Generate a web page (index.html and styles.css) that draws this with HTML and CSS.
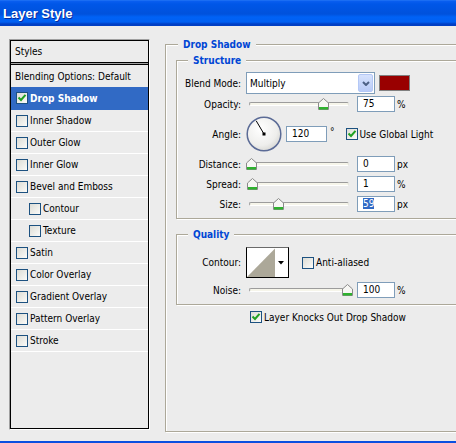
FILE: index.html
```html
<!DOCTYPE html>
<html lang="en">
<head>
  <meta charset="UTF-8"/>
  <title>Layer Style</title>
  <link rel="stylesheet" href="styles.css">
</head>
<body>
  <div class="window">
    <div class="titlebar">Layer Style</div>

    <div class="dialog">
      <div class="styles-panel">
        <div class="styles-list">
          <div class="styles-head">Styles</div>
          <div class="styles-sep"></div>
          <div class="style-item blending">Blending Options: Default</div>
          <div class="style-item selected">
            <span class="check"><svg width="10" height="10" viewBox="0 0 10 10"><path d="M1.5 4.5 L4 7 L8.5 1.8" fill="none" stroke="#21a121" stroke-width="2"/></svg></span>Drop Shadow
          </div>
          <div class="style-item"><span class="check"></span>Inner Shadow</div>
          <div class="style-item"><span class="check"></span>Outer Glow</div>
          <div class="style-item"><span class="check"></span>Inner Glow</div>
          <div class="style-item"><span class="check"></span>Bevel and Emboss</div>
          <div class="style-item sub"><span class="check"></span>Contour</div>
          <div class="style-item sub"><span class="check"></span>Texture</div>
          <div class="style-item"><span class="check"></span>Satin</div>
          <div class="style-item"><span class="check"></span>Color Overlay</div>
          <div class="style-item"><span class="check"></span>Gradient Overlay</div>
          <div class="style-item"><span class="check"></span>Pattern Overlay</div>
          <div class="style-item"><span class="check"></span>Stroke</div>
        </div>
      </div>

      <fieldset class="group effect">
        <legend>Drop Shadow</legend>

        <fieldset class="group structure">
          <legend>Structure</legend>

          <div class="row row-blend">
            <label>Blend Mode:</label>
            <div class="select">
              <span>Multiply</span>
              <span class="select-btn"><svg width="8" height="5" viewBox="0 0 8 5"><polyline points="1,1 4,4 7,1" fill="none" stroke="#4d6185" stroke-width="2"/></svg></span>
            </div>
            <div class="swatch"></div>
          </div>

          <div class="row row-opacity">
            <label>Opacity:</label>
            <div class="slider">
              <div class="track"></div>
              <svg class="thumb" style="left:72px" width="11" height="12" viewBox="0 0 11 12"><path d="M5.5 0.5 L10.5 5 V11.5 H0.5 V5 Z" fill="#f7f7f4" stroke="#8a8a8a"/><rect x="1" y="9" width="9" height="2.5" fill="#2eb22e"/></svg>
            </div>
            <div class="num">75</div><span class="unit">%</span>
          </div>

          <div class="row row-angle">
            <label>Angle:</label>
            <svg class="dial" width="36" height="36" viewBox="0 0 36 36">
              <defs>
                <radialGradient id="dialFill" cx="40%" cy="35%" r="70%">
                  <stop offset="0" stop-color="#ffffff"/>
                  <stop offset="0.7" stop-color="#eeeeec"/>
                  <stop offset="1" stop-color="#d6d6d2"/>
                </radialGradient>
              </defs>
              <circle cx="18" cy="18" r="16.8" fill="url(#dialFill)" stroke="#5b6b96" stroke-width="1.5"/>
              <line x1="18" y1="18" x2="10.2" y2="4.8" stroke="#000" stroke-width="1"/>
              <rect x="16.5" y="16.5" width="3" height="3" fill="#000"/>
            </svg>
            <div class="num num-wide">120</div>
            <span class="degree">°</span>
            <span class="check global"><svg width="10" height="10" viewBox="0 0 10 10"><path d="M1.5 4.5 L4 7 L8.5 1.8" fill="none" stroke="#21a121" stroke-width="2"/></svg></span>
            <span class="check-label">Use Global Light</span>
          </div>

          <div class="row">
            <label>Distance:</label>
            <div class="slider">
              <div class="track"></div>
              <svg class="thumb" style="left:0px" width="11" height="12" viewBox="0 0 11 12"><path d="M5.5 0.5 L10.5 5 V11.5 H0.5 V5 Z" fill="#f7f7f4" stroke="#8a8a8a"/><rect x="1" y="9" width="9" height="2.5" fill="#2eb22e"/></svg>
            </div>
            <div class="num">0</div><span class="unit">px</span>
          </div>

          <div class="row">
            <label>Spread:</label>
            <div class="slider">
              <div class="track"></div>
              <svg class="thumb" style="left:1px" width="11" height="12" viewBox="0 0 11 12"><path d="M5.5 0.5 L10.5 5 V11.5 H0.5 V5 Z" fill="#f7f7f4" stroke="#8a8a8a"/><rect x="1" y="9" width="9" height="2.5" fill="#2eb22e"/></svg>
            </div>
            <div class="num">1</div><span class="unit">%</span>
          </div>

          <div class="row">
            <label>Size:</label>
            <div class="slider">
              <div class="track"></div>
              <svg class="thumb" style="left:27px" width="11" height="12" viewBox="0 0 11 12"><path d="M5.5 0.5 L10.5 5 V11.5 H0.5 V5 Z" fill="#f7f7f4" stroke="#8a8a8a"/><rect x="1" y="9" width="9" height="2.5" fill="#2eb22e"/></svg>
            </div>
            <div class="num"><span class="sel">59</span></div><span class="unit">px</span>
          </div>
        </fieldset>

        <fieldset class="group quality">
          <legend>Quality</legend>

          <div class="row row-contour">
            <label>Contour:</label>
            <svg class="contour" width="43" height="31" viewBox="0 0 43 31">
              <rect x="0.5" y="0.5" width="42" height="30" fill="#fff" stroke="#000"/>
              <line x1="0.5" y1="0.5" x2="42.5" y2="0.5" stroke="#6a6a6a"/>
              <polygon points="1,30 29,1.5 29,30" fill="#aca899"/>
              <polygon points="32,14 38,14 35,17.5" fill="#000"/>
            </svg>
            <span class="check aa"></span>
            <span class="check-label">Anti-aliased</span>
          </div>

          <div class="row">
            <label>Noise:</label>
            <div class="slider">
              <div class="track"></div>
              <svg class="thumb" style="left:96px" width="11" height="12" viewBox="0 0 11 12"><path d="M5.5 0.5 L10.5 5 V11.5 H0.5 V5 Z" fill="#f7f7f4" stroke="#8a8a8a"/><rect x="1" y="9" width="9" height="2.5" fill="#2eb22e"/></svg>
            </div>
            <div class="num">100</div><span class="unit">%</span>
          </div>
        </fieldset>

        <div class="knockout">
          <span class="check"><svg width="10" height="10" viewBox="0 0 10 10"><path d="M1.5 4.5 L4 7 L8.5 1.8" fill="none" stroke="#21a121" stroke-width="2"/></svg></span>
          <span class="check-label">Layer Knocks Out Drop Shadow</span>
        </div>
      </fieldset>
    </div>
  </div>
</body>
</html>
```

FILE: styles.css
```css
html, body {
  margin: 0; padding: 0;
  width: 456px; height: 443px;
  overflow: hidden;
  background: #ececec; color: #000;
  font-family: "DejaVu Sans Condensed", "DejaVu Sans", sans-serif;
  font-stretch: condensed;
  font-size: 10px;
}
.window {
  height: 443px;
  box-sizing: border-box;
  border-bottom: 2px solid #0a4fe0;
  overflow: hidden;
}
.titlebar {
  height: 26px;
  box-sizing: border-box;
  padding-left: 3px;
  background: linear-gradient(#2a7cf6 0, #0a5ef0 1px, #0057e8 4px, #0052dc 14px, #0062f6 17px, #0060f2 22px, #003fc4 24px, #003fc4 26px);
  color: #fff;
  font: bold 13px/27px "Liberation Sans", Arial, sans-serif;
  text-shadow: 1px 1px 0 #0a2a9a;
}
.dialog {
  display: flex; align-items: flex-start;
  padding: 13px 0 0 9px;
}

/* styles list */
.styles-panel {
  flex: 0 0 auto;
  border: 1px solid;
  border-color: #a0a0a0 #fff #fff #a0a0a0;
}
.styles-list {
  width: 137px; height: 387px;
  border: 1px solid #000;
}
.styles-head {
  height: 21px; line-height: 21px;
  padding-left: 4px;
}
.styles-sep {
  height: 1px;
  border-top: 1px solid #000; border-bottom: 1px solid #000;
  background: #a0a0a0;
}
.style-item {
  display: flex; align-items: center;
  height: 21px;
  padding-left: 5px;
  border-bottom: 1px solid #fff;
  white-space: nowrap;
}
.style-item.blending {
  height: 22px; padding-left: 4px;
  border-bottom: none;
}
.style-item.selected {
  height: 22px;
  background: #316ac5; border-bottom-color: #316ac5;
  color: #fff; font-weight: bold;
}
.style-item.sub { padding-left: 18px; }
.style-item .check { margin-right: 2px; }

/* checkboxes */
.check {
  flex: 0 0 auto;
  display: inline-flex; align-items: center; justify-content: center;
  width: 12px; height: 12px;
  box-sizing: border-box;
  border: 1px solid #1c5180;
  background: linear-gradient(135deg, #dcdcd5, #fbfbf9);
}
.check-label { margin-left: 2px; white-space: nowrap; }

/* group boxes */
.group {
  margin: 0; padding: 0;
  min-width: 0;
  border: 1px solid #aca899;
  box-shadow: inset 1px 1px 0 #fff, 1px 1px 0 #fff;
}
.group legend {
  padding: 0 5px;
  line-height: 13px;
  background: #ececec;
  color: #0046d5; font-weight: bold;
}
.effect {
  flex: 0 0 auto;
  width: 330px; height: 394px;
  box-sizing: border-box;
  margin: -1px 0 0 15px;
  padding: 3px 10px 0 10px;
}
.effect > legend { margin-left: 2px; }
.structure { padding: 5px 0 6px 0; }
.quality { margin-top: 9px; padding: 6px 0 6px 0; }
.structure > legend, .quality > legend { margin-left: 11px; }

/* rows */
.row {
  display: flex; align-items: center;
  height: 16px;
  margin-top: 4px;
  white-space: nowrap;
}
.row label {
  flex: 0 0 auto;
  width: 64px; margin-right: 5px;
  text-align: right;
}
.row-blend { height: 22px; margin-top: 0; }
.row-opacity { margin-top: 2px; }
.row-angle { height: 36px; }
.row-contour { height: 31px; margin-top: 0; }

.select {
  display: flex; align-items: center;
  width: 129px; height: 22px;
  box-sizing: border-box;
  border: 1px solid #7f9db9;
  background: #fff;
  padding-left: 3px;
}
.select-btn {
  display: flex; align-items: center; justify-content: center;
  margin-left: auto; margin-right: 1px;
  width: 15px; height: 18px;
  box-sizing: border-box;
  border: 1px solid #b4c8f6; border-radius: 2px;
  background: linear-gradient(#d6e2fd, #b9cbf7);
}
.swatch {
  width: 31px; height: 16px;
  box-sizing: border-box;
  margin-left: 4px;
  border: 1px solid #808080;
  background: #990000;
}

.slider {
  position: relative;
  flex: 0 0 auto;
  width: 107px; height: 16px;
}
.slider .track {
  position: absolute;
  left: 3px; top: 6px;
  width: 98px; height: 2px;
  border: 1px solid;
  border-color: #9c9c9c #e4e4dc #fff #9c9c9c;
  border-radius: 2px;
  background: #f6f5ea;
}
.slider .thumb {
  position: absolute;
  top: 2px;
}

.num {
  flex: 0 0 auto;
  width: 38px; height: 16px;
  box-sizing: border-box;
  margin-left: 4px;
  padding-left: 5px;
  border: 1px solid #7f9db9;
  background: #fff;
  line-height: 14px;
}
.num .sel { background: #316ac5; color: #fff; }
.num-wide { width: 41px; margin-left: 4px; }
.unit { margin-left: 2px; }
.degree { margin-left: 3px; align-self: flex-start; margin-top: 10px; }
.check.global { margin-left: 11px; }

.contour { flex: 0 0 auto; }
.check.aa { margin-left: 13px; }

.knockout {
  display: flex; align-items: center;
  margin-top: 6px;
  padding-left: 74px;
}
```
